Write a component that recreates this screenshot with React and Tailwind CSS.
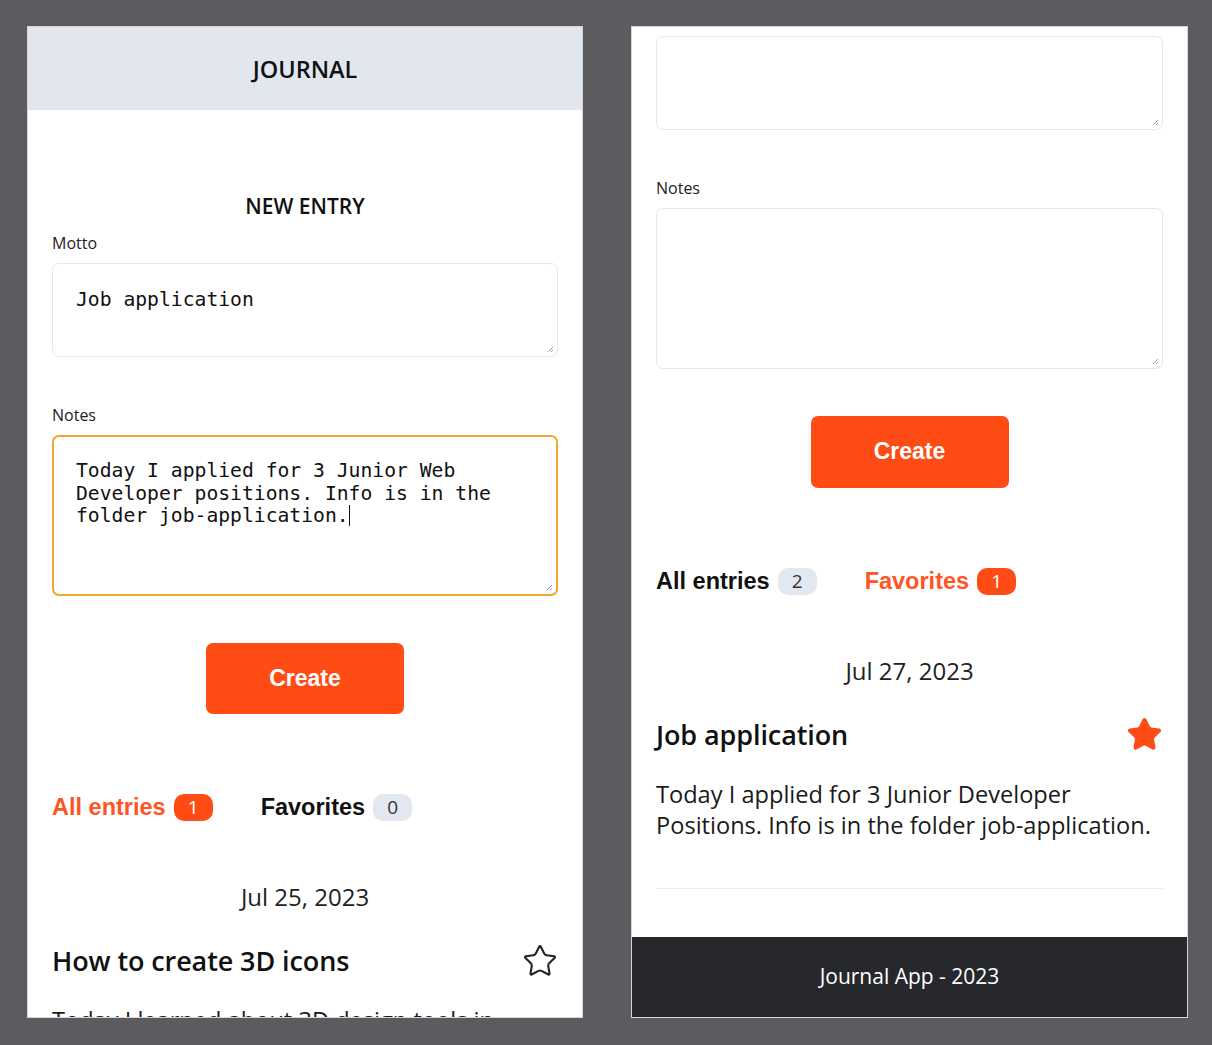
import React from 'react';
import { Star } from 'lucide-react';

const sans = "font-['Open_Sans',sans-serif]";
const arial = "font-['Liberation_Sans',Arial,sans-serif]";

function Grip() {
  return (
    <svg className="absolute bottom-[3px] right-[3px]" width="7" height="7" viewBox="0 0 7 7">
      <path d="M6 1 L1 6 M6 4 L4 6" stroke="#9ca3af" strokeWidth="1" />
    </svg>
  );
}

function Label({ children, className = '' }) {
  return <div className={`${sans} text-[16px] leading-[22px] text-[#222] ${className}`}>{children}</div>;
}

function FieldBox({ value, focused, caret, className = '' }) {
  return (
    <div
      className={`relative rounded-[7px] bg-white font-['DejaVu_Sans_Mono',monospace] text-[19.7px] leading-[22.6px] text-[#111] whitespace-pre-wrap ${
        focused ? 'border-2 border-[#f2a62c] px-[22px] pt-[23px]' : 'border border-[#e4e8ef] px-[23px] pt-[25px]'
      } ${className}`}
    >
      {value}
      {caret && <span className="inline-block w-px h-[21px] bg-[#111] align-[-4px]" />}
      <Grip />
    </div>
  );
}

function CreateButton({ className = '' }) {
  return (
    <button
      className={`mx-auto flex w-[198px] items-center justify-center rounded-[7px] bg-[#ff4c15] pb-px ${arial} text-[23px] font-bold text-white ${className}`}
    >
      Create
    </button>
  );
}

function Tab({ label, count, active }) {
  return (
    <div className="flex items-center gap-2">
      <span className={`${arial} text-[23.5px] leading-[27px] font-bold ${active ? 'text-[#ff5424]' : 'text-[#111]'}`}>
        {label}
      </span>
      <span
        className={`flex h-[27px] w-[39px] items-center justify-center rounded-[10px] ${sans} text-[19px] ${
          active ? 'bg-[#ff4c15] text-white' : 'bg-[#e3e7ef] text-[#333]'
        }`}
      >
        {count}
      </span>
    </div>
  );
}

function Tabs({ active, all, favs, className = '' }) {
  return (
    <div className={`flex items-center gap-12 ${className}`}>
      <Tab label="All entries" count={all} active={active === 'all'} />
      <Tab label="Favorites" count={favs} active={active === 'favs'} />
    </div>
  );
}

function Entry({ date, title, text, favorite, divider }) {
  return (
    <article className={sans}>
      <p className="mt-[60px] text-center text-[24px] leading-[32px] text-[#222]">{date}</p>
      <div className="mt-[29px] flex h-[37px] items-center justify-between">
        <h3 className="text-[27px] leading-[36px] font-semibold tracking-[-0.1px] text-[#111]">{title}</h3>
        {favorite ? (
          <Star size={37} fill="#ff4c15" color="#ff4c15" strokeWidth={1.5} />
        ) : (
          <Star size={36} color="#222" strokeWidth={1.4} />
        )}
      </div>
      <p className="mt-[26px] text-[23.6px] leading-[31px] text-[#1a1a1a]">{text}</p>
      {divider && <div className="mt-[47px] h-px bg-[#eceef2]" />}
    </article>
  );
}

function LeftScreen() {
  return (
    <div className="flex h-[992px] w-[556px] flex-col overflow-hidden border border-[#d5d5d8] bg-white">
      <header className={`flex h-[83px] shrink-0 items-center justify-center bg-[#e2e6ee] pt-[2px] ${sans}`}>
        <h1 className="text-[23.5px] font-semibold text-[#111]">JOURNAL</h1>
      </header>
      <main className="px-6">
        <h2 className={`mt-[82px] text-center ${sans} text-[21px] leading-[28px] font-semibold text-[#111]`}>
          NEW ENTRY
        </h2>
        <Label className="mt-[12px]">Motto</Label>
        <FieldBox className="mt-[9px] h-[94px]" value="Job application" />
        <Label className="mt-[47px]">Notes</Label>
        <FieldBox
          className="mt-[9px] h-[161px]"
          focused
          caret
          value="Today I applied for 3 Junior Web Developer positions. Info is in the folder job-application."
        />
        <CreateButton className="mt-[47px] h-[71px]" />
        <Tabs className="mt-[80px]" active="all" all={1} favs={0} />
        <Entry
          date="Jul 25, 2023"
          title="How to create 3D icons"
          text="Today I learned about 3D design tools in Blender and Spline."
        />
      </main>
    </div>
  );
}

function RightScreen() {
  return (
    <div className="flex h-[992px] w-[557px] flex-col overflow-hidden border border-[#d5d5d8] bg-white">
      <main className="px-6 pt-[9px]">
        <FieldBox className="h-[94px]" value="" />
        <Label className="mt-[47px]">Notes</Label>
        <FieldBox className="mt-[9px] h-[161px]" value="" />
        <CreateButton className="mt-[47px] h-[72px]" />
        <Tabs className="mt-[80px]" active="favs" all={2} favs={1} />
        <Entry
          date="Jul 27, 2023"
          title="Job application"
          favorite
          divider
          text="Today I applied for 3 Junior Developer Positions. Info is in the folder job-application."
        />
      </main>
      <footer className={`mt-auto flex h-[80px] shrink-0 items-center justify-center bg-[#27282c] ${sans} text-[21px] font-medium text-white`}>
        Journal App - 2023
      </footer>
    </div>
  );
}

export default function App() {
  return (
    <div className="flex min-h-[1045px] w-[1212px] gap-12 bg-[#5c5b60] pl-[27px] pt-[26px]">
      <LeftScreen />
      <RightScreen />
    </div>
  );
}
